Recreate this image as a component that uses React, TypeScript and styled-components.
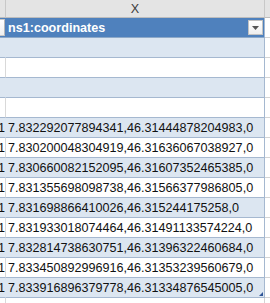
import React from "react";
import styled, { createGlobalStyle } from "styled-components";

const GlobalStyle = createGlobalStyle`
  html, body { margin: 0; padding: 0; background: #ffffff; overflow: hidden; }
`;

const Sheet = styled.div`
  width: 270px;
  height: 303px;
  overflow: hidden;
  font-family: "Liberation Sans", Arial, sans-serif;
  font-size: 12.6px;
  color: #111;
  background: #fff;
`;

const Row = styled.div<{ $h: number }>`
  display: grid;
  grid-template-columns: 6px 259px 5px;
  height: ${(p) => p.$h}px;
`;

const ColHeadLeft = styled.div`
  background: #e4e4e4;
  border-right: 1px solid #c8c8c8;
  border-bottom: 1px solid #bdbdbd;
`;

const ColHeadMain = styled.div`
  background: #e4e4e4;
  border-right: 1px solid #c8c8c8;
  border-bottom: 1px solid #bdbdbd;
  display: flex;
  align-items: center;
  justify-content: center;
  color: #3c3c3c;
  font-size: 12.6px;
  padding-top: 1px;
  box-sizing: border-box;
`;

const ColHeadRight = styled.div`
  background: #e4e4e4;
  border-bottom: 1px solid #bdbdbd;
`;

const HeadLeft = styled.div`
  background: #4f81bd;
  border-bottom: 1px solid #8ea9c8;
  display: flex;
  align-items: center;
`;

const FilterEdge = styled.div`
  width: 4px;
  height: 15px;
  background: linear-gradient(#ffffff, #f0f0f0);
  border-right: 1px solid #b7b7b7;
  border-top: 1px solid #c8c8c8;
  border-bottom: 1px solid #c8c8c8;
`;

const HeadMain = styled.div`
  background: #4f81bd;
  border-right: 1px solid #a5b8d0;
  border-bottom: 1px solid #8ea9c8;
  display: flex;
  align-items: center;
  justify-content: space-between;
  padding-left: 2px;
  padding-right: 1px;
  box-sizing: border-box;
  color: #ffffff;
  font-weight: bold;
  font-size: 12.6px;
`;

const HeadLabel = styled.span`
  padding-top: 1px;
`;

const FilterButton = styled.div`
  width: 15px;
  height: 15px;
  box-sizing: border-box;
  background: linear-gradient(#ffffff, #eeeeee);
  border: 1px solid #c2c2c2;
  display: flex;
  align-items: center;
  justify-content: center;
`;

const HeadRight = styled.div`
  background: #ffffff;
  border-bottom: 1px solid #d4d4d4;
`;

const LeftCell = styled.div<{ $band: boolean }>`
  background: ${(p) => (p.$band ? "#dce6f1" : "#ffffff")};
  border-right: 1px solid ${(p) => (p.$band ? "#dce6f1" : "#d9d9d9")};
  border-bottom: 1px solid #a5b8d0;
  overflow: hidden;
  display: flex;
  justify-content: flex-end;
  line-height: 20px;
  padding-top: 0px;
  white-space: nowrap;
`;

const MainCell = styled.div<{ $band: boolean }>`
  position: relative;
  background: ${(p) => (p.$band ? "#dce6f1" : "#ffffff")};
  border-right: 1px solid #a5b8d0;
  border-bottom: 1px solid #a5b8d0;
  padding-left: 2px;
  line-height: 20px;
  white-space: nowrap;
  overflow: hidden;
`;

const RightCell = styled.div`
  background: #ffffff;
  border-bottom: 1px solid #d4d4d4;
`;

const Tail = styled.div`
  display: grid;
  grid-template-columns: 6px 259px 5px;
  height: 10px;
`;

const TailLeft = styled.div`
  border-right: 1px solid #d9d9d9;
`;

const TailMain = styled.div`
  border-right: 1px solid #d4d4d4;
`;

const ResizeHandle = styled.div`
  position: absolute;
  right: 1px;
  bottom: 1px;
  width: 0;
  height: 0;
  border-left: 4px solid transparent;
  border-bottom: 4px solid #2f5597;
`;

const values = [
  "",
  "",
  "",
  "",
  "7.832292077894341,46.31444878204983,0",
  "7.830200048304919,46.31636067038927,0",
  "7.830660082152095,46.31607352465385,0",
  "7.831355698098738,46.31566377986805,0",
  "7.831698866410026,46.315244175258,0",
  "7.831933018074464,46.31491133574224,0",
  "7.832814738630751,46.31396322460684,0",
  "7.833450892996916,46.31353239560679,0",
  "7.833916896379778,46.31334876545005,0",
];

export default function App() {
  return (
    <>
      <GlobalStyle />
      <Sheet>
        <Row $h={18}>
          <ColHeadLeft />
          <ColHeadMain>X</ColHeadMain>
          <ColHeadRight />
        </Row>
        <Row $h={20}>
          <HeadLeft>
            <FilterEdge />
          </HeadLeft>
          <HeadMain>
            <HeadLabel>ns1:coordinates</HeadLabel>
            <FilterButton>
              <svg width="7" height="4" viewBox="0 0 7 4">
                <path d="M0 0 L7 0 L3.5 4 Z" fill="#555555" />
              </svg>
            </FilterButton>
          </HeadMain>
          <HeadRight />
        </Row>
        {values.map((v, i) => {
          const band = i % 2 === 0;
          const last = i === values.length - 1;
          return (
            <Row $h={20} key={i}>
              <LeftCell $band={band}>{v ? "1" : ""}</LeftCell>
              <MainCell $band={band}>
                {v}
                {last && <ResizeHandle />}
              </MainCell>
              <RightCell />
            </Row>
          );
        })}
        <Tail>
          <TailLeft />
          <TailMain />
          <div />
        </Tail>
      </Sheet>
    </>
  );
}
